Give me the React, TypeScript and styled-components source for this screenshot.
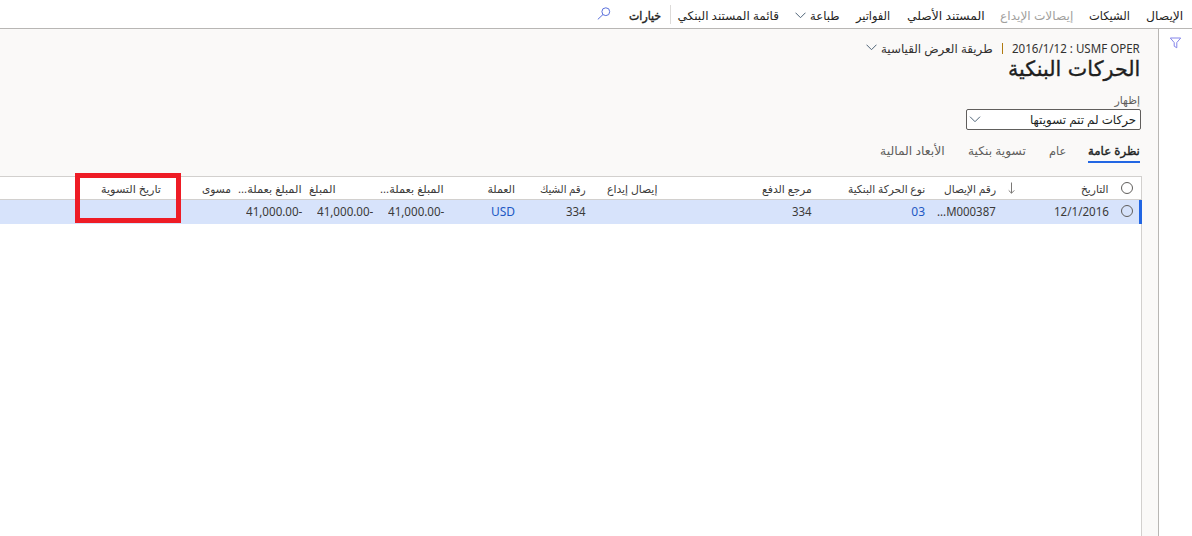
import React, { useLayoutEffect, useRef, useState } from 'react';
import styled, { createGlobalStyle } from 'styled-components';

const Global = createGlobalStyle`
  * { box-sizing: border-box; }
  html, body { margin: 0; padding: 0; background: #fff; overflow: hidden; }
  body { font-family: "Noto Sans", "DejaVu Sans", sans-serif; font-size: 12px; color: #323130; }
`;

const Slot = styled.span<{ $w: number; $gap?: number }>`
  display: block;
  flex: none;
  width: ${p => p.$w}px;
  margin-inline-start: ${p => p.$gap ?? 0}px;
  white-space: nowrap;
`;
const Run = styled.span`
  display: inline-block;
  transform-origin: right center;
`;

/* Text condensed or expanded to the width its slot allows. */
function Fit({ w, gap, dir, children }: { w: number; gap?: number; dir?: string; children: React.ReactNode }) {
  const ref = useRef<HTMLSpanElement>(null);
  const [scale, setScale] = useState(1);
  useLayoutEffect(() => {
    if (ref.current && ref.current.offsetWidth) setScale(w / ref.current.offsetWidth);
  }, [w, children]);
  return (
    <Slot $w={w} $gap={gap}>
      <Run ref={ref} dir={dir} style={{ transform: `scaleX(${scale})` }}>{children}</Run>
    </Slot>
  );
}

const Page = styled.div`
  direction: rtl;
  width: 1192px;
  height: 536px;
  display: flex;
  flex-direction: column;
  overflow: hidden;
`;
const Toolbar = styled.nav`
  height: 29px;
  flex: none;
  display: flex;
  align-items: center;
  padding: 4px 9px 0 0;
  background: #fff;
  border-bottom: 1px solid #b8b6b4;
`;
const Command = styled.div<{ $gap?: number; $disabled?: boolean; $strong?: boolean }>`
  display: flex;
  align-items: center;
  height: 26px;
  line-height: 26px;
  margin-inline-start: ${p => p.$gap ?? 0}px;
  color: ${p => (p.$disabled ? '#a19f9d' : '#252423')};
  -webkit-text-stroke: ${p => (p.$strong ? '0.4px #252423' : '0')};
`;
const Divider = styled.span`
  width: 1px;
  height: 19px;
  margin: 0 7px 4px 9px;
  background: #dddbd9;
`;
const Glyph = styled.svg<{ $gap?: number; $lift?: number }>`
  display: block;
  flex: none;
  fill: none;
  margin-inline-start: ${p => p.$gap ?? 0}px;
  margin-bottom: ${p => p.$lift ?? 0}px;
`;
const Body = styled.div`
  flex: 1;
  display: flex;
  min-height: 0;
`;
const FilterRail = styled.aside`
  width: 34px;
  flex: none;
  background: #fff;
  border-left: 1px solid #b8b6b4;
  padding: 8px 10px 0 0;
`;
const Main = styled.main`
  flex: 1;
  background: #faf9f8;
  display: flex;
  flex-direction: column;
  min-width: 0;
`;
const Heading = styled.header`
  padding-right: 18px;
  height: 63px;
`;
const Crumbs = styled.div`
  display: flex;
  align-items: center;
  height: 19px;
  line-height: 17px;
  margin-top: 10px;
`;
const Bar = styled.span`
  width: 1px;
  height: 11px;
  margin: 0 9px 0 9px;
  background: #b07a10;
`;
const Title = styled.h1`
  margin: -1px 0 0;
  font-family: "DejaVu Sans", sans-serif;
  font-size: 21px;
  line-height: 24px;
  font-weight: 400;
  color: #201f1e;
  -webkit-text-stroke: 0.35px #201f1e;
`;
const Field = styled.div`
  width: 175px;
  margin-right: 17px;
  color: #605e5c;
`;
const FieldLabel = styled.div`
  height: 17px;
  line-height: 15px;
  font-size: 11px;
  margin-right: 1px;
`;
const Select = styled.div`
  display: flex;
  align-items: center;
  justify-content: space-between;
  height: 21px;
  line-height: 17px;
  padding: 0 4px 1px 2px;
  border: 1px solid #605e5c;
  border-radius: 2px;
  background: #fff;
  color: #201f1e;
`;
const Tabs = styled.div`
  display: flex;
  height: 33px;
  margin: 0 18px 13px 0;
`;
const Tab = styled.div<{ $gap?: number; $active?: boolean }>`
  height: 33px;
  line-height: 42px;
  margin-inline-start: ${p => p.$gap ?? 0}px;
  color: ${p => (p.$active ? '#201f1e' : '#605e5c')};
  -webkit-text-stroke: ${p => (p.$active ? '0.4px #201f1e' : '0')};
  border-bottom: 2px solid ${p => (p.$active ? '#2266e3' : 'transparent')};
`;
const Grid = styled.section`
  flex: 1;
  margin-right: 16px;
  background: #fff;
  border-top: 1px solid #d2d0ce;
  border-right: 1px solid #d2d0ce;
`;
const columns = '113px 71px 113px 155px 71px 71px 71px 71px 71px 71px 70px 1fr';
const HeaderRow = styled.div`
  display: grid;
  grid-template-columns: 32px ${columns};
  height: 23px;
  line-height: 23px;
  font-size: 11px;
  border-bottom: 1px solid #d2d0ce;
`;
const DataRow = styled.div`
  display: grid;
  grid-template-columns: 30px ${columns};
  height: 24px;
  line-height: 24px;
  background: #d7e3fb;
  margin-right: -1px;
  border-right: 3px solid #2266e3;
`;
const Cell = styled.div<{ $link?: boolean; $nudge?: number }>`
  display: flex;
  align-items: center;
  min-width: 0;
  padding-right: ${p => p.$nudge ?? 0}px;
  color: ${p => (p.$link ? '#2158c4' : '#3b3a39')};
`;
const Radio = styled.span<{ $inset: number; $lift: number }>`
  width: 12px;
  height: 12px;
  margin-right: ${p => p.$inset}px;
  margin-bottom: ${p => p.$lift}px;
  border: 1px solid #605e5c;
  border-radius: 50%;
`;
const Callout = styled.div`
  position: absolute;
  left: 75px;
  top: 173px;
  width: 106px;
  height: 50px;
  border: 5px solid #ee1c25;
`;

const Chevron = ({ gap, lift = 2, wide }: { gap?: number; lift?: number; wide?: boolean }) => (
  <Glyph $gap={gap} $lift={lift} width={wide ? 12 : 11} height="7" viewBox="0 0 11 7" stroke="#4f6478">
    <path d="M.5.7 5.5 5.7 10.5.7" />
  </Glyph>
);

export default function App() {
  return (
    <Page>
      <Global />
      <Toolbar>
        <Command><Fit w={37}>الإيصال</Fit></Command>
        <Command $gap={16}><Fit w={41}>الشيكات</Fit></Command>
        <Command $gap={16} $disabled><Fit w={73}>إيصالات الإيداع</Fit></Command>
        <Command $gap={15}><Fit w={78}>المستند الأصلي</Fit></Command>
        <Command $gap={17}><Fit w={34}>الفواتير</Fit></Command>
        <Command $gap={17}><Fit w={29}>طباعة</Fit><Chevron gap={4} lift={2} /></Command>
        <Command $gap={16}><Fit w={101}>قائمة المستند البنكي</Fit></Command>
        <Divider />
        <Command $strong><Fit w={32}>خيارات</Fit></Command>
        <Glyph $gap={18} $lift={5} width="14" height="13" viewBox="0 0 14 13" stroke="#5a70dc">
          <circle cx="8.8" cy="4.7" r="3.9" />
          <path d="M6 7.5.8 12.4" />
        </Glyph>
      </Toolbar>
      <Body>
        <FilterRail>
          <Glyph width="12" height="12" viewBox="0.5 0 12 12" stroke="#8485ea">
            <path d="M.8 1h10.4L7.3 5.6v5.2L4.7 9.2V5.6Z" />
          </Glyph>
        </FilterRail>
        <Main>
          <Heading>
            <Crumbs>
              <Fit w={128} dir="ltr">2016/1/12 : USMF OPER</Fit>
              <Bar />
              <Fit w={112}>طريقة العرض القياسية</Fit>
              <Chevron gap={4} />
            </Crumbs>
            <Title><Fit w={132}>الحركات البنكية</Fit></Title>
          </Heading>
          <Field>
            <FieldLabel><Fit w={26}>إظهار</Fit></FieldLabel>
            <Select><Fit w={106}>حركات لم تتم تسويتها</Fit><Chevron wide lift={0} /></Select>
          </Field>
          <Tabs>
            <Tab $active><Fit w={52}>نظرة عامة</Fit></Tab>
            <Tab $gap={22}><Fit w={17}>عام</Fit></Tab>
            <Tab $gap={23}><Fit w={58}>تسوية بنكية</Fit></Tab>
            <Tab $gap={23}><Fit w={65}>الأبعاد المالية</Fit></Tab>
          </Tabs>
          <Grid>
            <HeaderRow>
              <Cell><Radio $inset={8} $lift={1} /></Cell>
              <Cell>
                <Fit w={28}>التاريخ</Fit>
                <Glyph $gap={66} $lift={2} width="7" height="12" viewBox="0 0 7 12" stroke="#7a7876">
                  <path d="M3.5.5v10.7M.7 8.4l2.8 2.8 2.8-2.8" />
                </Glyph>
              </Cell>
              <Cell><Fit w={52}>رقم الإيصال</Fit></Cell>
              <Cell><Fit w={77}>نوع الحركة البنكية</Fit></Cell>
              <Cell><Fit w={50}>مرجع الدفع</Fit></Cell>
              <Cell><Fit w={50}>إيصال إيداع</Fit></Cell>
              <Cell><Fit w={46}>رقم الشيك</Fit></Cell>
              <Cell><Fit w={28}>العملة</Fit></Cell>
              <Cell><Fit w={64}>المبلغ بعملة...</Fit></Cell>
              <Cell $nudge={37}><Fit w={27}>المبلغ</Fit></Cell>
              <Cell><Fit w={64}>المبلغ بعملة...</Fit></Cell>
              <Cell><Fit w={29}>مسوى</Fit></Cell>
              <Cell><Fit w={60}>تاريخ التسوية</Fit></Cell>
            </HeaderRow>
            <DataRow>
              <Cell><Radio $inset={6} $lift={2} /></Cell>
              <Cell><Fit w={55} dir="ltr">12/1/2016</Fit></Cell>
              <Cell><Fit w={59} dir="ltr">...M000387</Fit></Cell>
              <Cell $link><Fit w={14}>03</Fit></Cell>
              <Cell><Fit w={20}>334</Fit></Cell>
              <Cell />
              <Cell><Fit w={20}>334</Fit></Cell>
              <Cell $link><Fit w={24}>USD</Fit></Cell>
              <Cell><Fit w={56} dir="ltr">41,000.00-</Fit></Cell>
              <Cell><Fit w={56} dir="ltr">41,000.00-</Fit></Cell>
              <Cell><Fit w={56} dir="ltr">41,000.00-</Fit></Cell>
              <Cell />
              <Cell />
            </DataRow>
          </Grid>
        </Main>
      </Body>
      <Callout />
    </Page>
  );
}
